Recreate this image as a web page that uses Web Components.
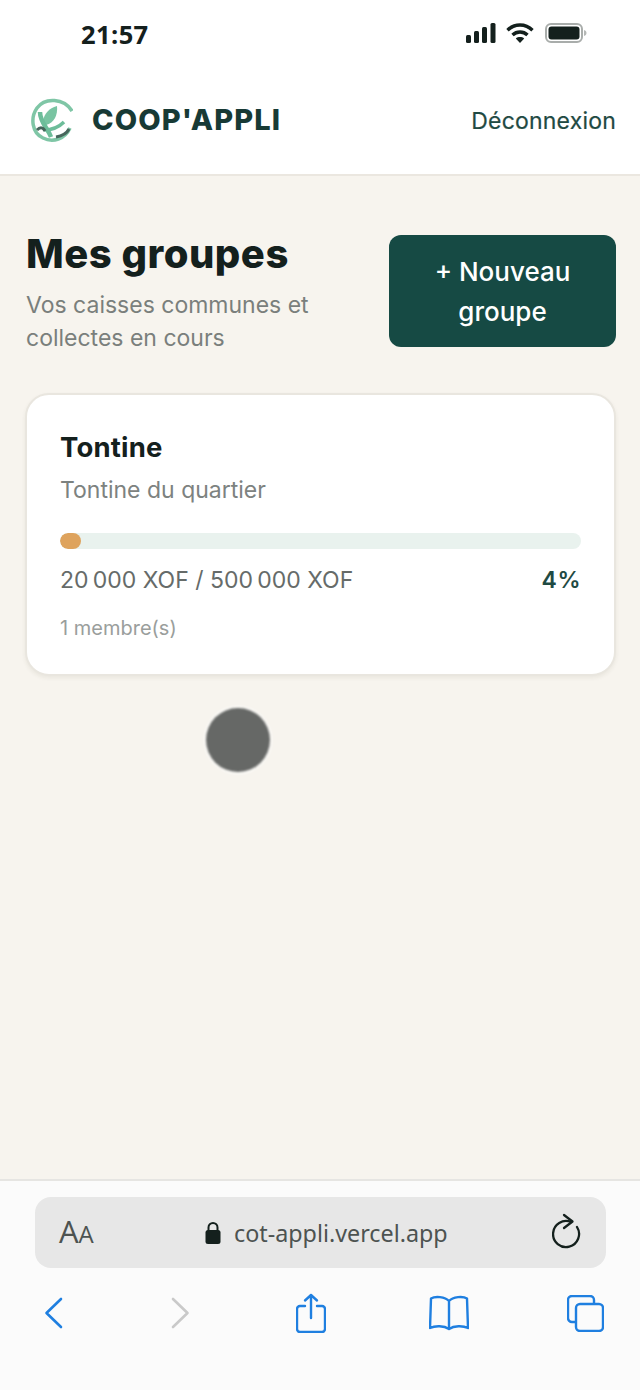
<!DOCTYPE html>
<html lang="fr">
<head>
<meta charset="utf-8">
<title>Coop'Appli</title>
<style>
  html, body { margin: 0; height: 100%; }
  body { width: 640px; height: 1390px; overflow: hidden; font-family: Inter, "Liberation Sans", sans-serif; background: #f7f4ee; position: relative; }
  #app { display: flex; flex-direction: column; height: 1390px; }
</style>
</head>
<body>
<div id="app">
  <status-bar time="21:57"></status-bar>
  <app-header></app-header>
  <main-area>
    <page-head title="Mes groupes" action="+ Nouveau groupe">Vos caisses communes et collectes en cours</page-head>
    <group-card name="Tontine" desc="Tontine du quartier" amount="20&#8201;000 XOF / 500&#8201;000 XOF" percent="4" members="1 membre(s)"></group-card>
  </main-area>
  <safari-bar url="cot-appli.vercel.app"></safari-bar>
</div>
<touch-dot></touch-dot>

<script>
class StatusBar extends HTMLElement {
  constructor() {
    super();
    this.attachShadow({ mode: 'open' }).innerHTML = `
<style>
  :host { display: flex; height: 68px; background: #fff; justify-content: space-between; box-sizing: border-box; padding: 20px 53px 0 81px; color: #14201d; }
  .time { font: 700 25.5px/28px "Open Sans", sans-serif; letter-spacing: .4px; }
  .icons { display: flex; gap: 9px; height: 24px; align-items: flex-start; margin-top: 2px; }
</style>
<span class="time">${this.getAttribute('time')}</span>
<div class="icons">
  <svg width="32" height="22" viewBox="0 0 32 22"><g fill="#14201d"><rect x="1" y="13" width="5" height="8" rx="1.5"/><rect x="9" y="9" width="5" height="12" rx="1.5"/><rect x="17" y="5" width="5" height="16" rx="1.5"/><rect x="25.500" y="1" width="5" height="20" rx="1.5"/></g></svg>
  <svg width="28" height="22" viewBox="0 0 28 22" fill="none" stroke="#14201d" stroke-width="3.400"><path d="M1.500 8.200C8.500 1.300 19.500 1.300 26.500 8.200"/><path d="M6.500 13C10.800 9 17.200 9 21.500 13"/><path d="M14 21 9.800 16.400C12 14.500 16 14.500 18.200 16.400Z" fill="#14201d" stroke="none"/></svg>
  <svg width="42" height="22" viewBox="0 0 42 22" style="margin-left:2px"><rect x="1" y="2" width="36" height="18" rx="5" fill="none" stroke="#a9adab" stroke-width="2"/><rect x="3.500" y="4.500" width="31" height="13" rx="3" fill="#14201d"/><path d="M39 8c1.500.4 2.500 1.500 2.500 3s-1 2.600-2.500 3z" fill="#b5b8b6"/></svg>
</div>`;
  }
}
customElements.define('status-bar', StatusBar);

class AppHeader extends HTMLElement {
  constructor() {
    super();
    this.attachShadow({ mode: 'open' }).innerHTML = `
<style>
  :host { display: flex; align-items: center; justify-content: space-between; height: 108px; box-sizing: border-box; background: #fff; border-bottom: 2px solid #ebe7e0; padding: 0 24px 0 31px; }
  .brand { display: flex; align-items: center; gap: 19px; margin-top: -2px; }
  svg { filter: blur(.5px); }
  .name { font: 800 29px/32px Inter, sans-serif; color: #173a35; letter-spacing: 1.1px; }
  .logout { font: 400 23px/28px Inter, sans-serif; color: #1f4a43; -webkit-text-stroke: .2px #1f4a43; letter-spacing: .2px; }
</style>
<div class="brand">
  <svg width="42" height="46" viewBox="0 0 42 46" fill="none">
    <path d="M41 14C33 1 14 0 6 11-1 21 1 36 12 41c10 5 22 1 27-10" stroke="#7fc6a6" stroke-width="3.500"/>
    <path d="M26 9C18 11 13 17 12 24l3 4c8-2 12-10 11-19z" fill="#79c4a2"/>
    <path d="M9 15c0 10 7 15 11 25" stroke="#6dbd9a" stroke-width="4.500"/>
    <path d="M13 33c7 0 15-3 20-8" stroke="#6dbd9a" stroke-width="3.500"/>
    <path d="M6 33c3-3 6-3 8 1" stroke="#47665c" stroke-width="3"/>
    <path d="M25 40c6-1 11-4 13-8" stroke="#47665c" stroke-width="3"/>
  </svg>
  <span class="name">COOP'APPLI</span>
</div>
<span class="logout">Déconnexion</span>`;
  }
}
customElements.define('app-header', AppHeader);

class MainArea extends HTMLElement {
  constructor() {
    super();
    this.attachShadow({ mode: 'open' }).innerHTML = `
<style>
  :host { display: flex; flex-direction: column; flex: 1; min-height: 0; background: #f7f4ee; padding: 58px 24px 0 26px; gap: 38px; }
</style>
<slot></slot>`;
  }
}
customElements.define('main-area', MainArea);

class PageHead extends HTMLElement {
  constructor() {
    super();
    this.attachShadow({ mode: 'open' }).innerHTML = `
<style>
  :host { display: flex; justify-content: space-between; align-items: flex-start; }
  h1 { margin: -1px 0 14px; font: 800 40px/42px Inter, sans-serif; color: #14201d; letter-spacing: .5px; }
  p { margin: 0; width: 330px; font: 400 23px/33px Inter, sans-serif; color: #7a7f7c; }
  button { all: unset; box-sizing: border-box; width: 227px; height: 112px; background: #164a44; border-radius: 12px; color: #fff; font: 500 26px/40px Inter, sans-serif; text-align: center; padding: 2px 30px 0; margin-top: 1px; }
</style>
<div>
  <h1>${this.getAttribute('title')}</h1>
  <p><slot></slot></p>
</div>
<button>${this.getAttribute('action')}</button>`;
  }
}
customElements.define('page-head', PageHead);

class ProgressBar extends HTMLElement {
  constructor() {
    super();
    this.attachShadow({ mode: 'open' }).innerHTML = `
<style>
  :host { display: block; height: 16px; border-radius: 8px; background: #e9f2ee; overflow: hidden; }
  div { height: 100%; width: ${this.getAttribute('value')}%; border-radius: 8px; background: #dea35d; }
</style>
<div></div>`;
  }
}
customElements.define('progress-bar', ProgressBar);

class GroupCard extends HTMLElement {
  constructor() {
    super();
    const a = n => this.getAttribute(n);
    this.attachShadow({ mode: 'open' }).innerHTML = `
<style>
  :host { display: block; box-sizing: border-box; height: 283px; margin-left: -1px; background: #fff; border: 2px solid #e9e6df; border-radius: 24px; box-shadow: 0 2px 4px rgba(60,50,30,.07); padding: 34px 33px 0 33px; }
  h2 { margin: 0; font: 700 27.5px/36px Inter, sans-serif; color: #14201d; letter-spacing: .2px; }
  .desc { margin: 9px 0 27px; font: 400 23px/32px Inter, sans-serif; color: #7d8280; }
  .row { display: flex; justify-content: space-between; margin-top: 15px; font: 400 23px/32px Inter, sans-serif; color: #666b69; }
  .pct { font-weight: 600; color: #1f4a43; letter-spacing: .5px; }
  .members { margin-top: 18px; font: 400 20px/28px Inter, sans-serif; color: #9a9e9c; }
</style>
<h2>${a('name')}</h2>
<div class="desc">${a('desc')}</div>
<progress-bar value="${a('percent')}"></progress-bar>
<div class="row"><span>${a('amount')}</span><span class="pct">${a('percent')}%</span></div>
<div class="members">${a('members')}</div>`;
  }
}
customElements.define('group-card', GroupCard);

class SafariBar extends HTMLElement {
  constructor() {
    super();
    this.attachShadow({ mode: 'open' }).innerHTML = `
<style>
  :host { display: block; height: 211px; box-sizing: border-box; background: #fbfbfb; border-top: 2px solid #e6e5e2; padding: 16px 34px 0 35px; }
  .url { display: flex; align-items: center; height: 71px; background: #e7e7e7; border-radius: 16px; padding: 0 24px; color: #4d5351; }
  .aa { width: 146px; font: 400 31px/36px "Open Sans", sans-serif; flex: none; white-space: nowrap; }
  .aa small { font-size: 24px; }
  .addr { display: flex; align-items: center; gap: 13px; font: 400 23.3px/32px "Noto Sans", sans-serif; flex: 1; }
  .tools { display: flex; align-items: center; margin: 18px 0 0; height: 54px; padding-left: 9px; }
  .tools svg + svg { flex: none; }
  .fwd { margin-left: 106px; }
  .share { margin-left: 106px; }
  .book { margin-left: 103px; }
  .tabs { margin-left: 98px; }
</style>
<div class="url">
  <span class="aa">A<small>A</small></span>
  <span class="addr">
    <svg width="16" height="23" viewBox="0 0 16 23"><path d="M3.500 10V6.500a4.500 4.500 0 0 1 9 0V10" fill="none" stroke="#14201d" stroke-width="2"/><rect x="0.500" y="9" width="15" height="14" rx="2.500" fill="#14201d"/></svg>
    ${this.getAttribute('url')}
  </span>
  <svg width="30" height="36" viewBox="0 0 30 36" fill="none" stroke="#14201d" stroke-width="2.300" stroke-linecap="round" stroke-linejoin="round" style="margin-top:-3px"><path d="M19 9A13 13 0 1 0 25 14"/><path d="M12 2l8.500 6.500L12 15"/></svg>
</div>
<div class="tools">
  <svg width="20" height="32" viewBox="0 0 20 32" fill="none" stroke="#1f7fe0" stroke-width="2.600" stroke-linecap="round" stroke-linejoin="round"><path d="M17 2 2.500 16 17 30"/></svg>
  <svg class="fwd" width="20" height="32" viewBox="0 0 20 32" fill="none" stroke="#c9c9c9" stroke-width="2.600" stroke-linecap="round" stroke-linejoin="round"><path d="M3 2l14.500 14L3 30"/></svg>
  <svg class="share" width="30" height="40" viewBox="0 0 30 40" fill="none" stroke="#1f7fe0" stroke-width="2.400" stroke-linecap="round" stroke-linejoin="round"><path d="M9 13H4a3 3 0 0 0-3 3v20a3 3 0 0 0 3 3h22a3 3 0 0 0 3-3V16a3 3 0 0 0-3-3h-5"/><path d="M15 25V2M9 7.500 15 2l6 5.500"/></svg>
  <svg class="book" width="40" height="36" viewBox="0 0 40 36" fill="none" stroke="#1f7fe0" stroke-width="2.400" stroke-linejoin="round"><path d="M20 6C16 1.500 6 1 2 3.500L1 33c5-2.500 14-2.500 19 1 5-3.500 14-3.500 19-1l-1-29.500C34 1 24 1.500 20 6Zm0 0v27"/></svg>
  <svg class="tabs" width="37" height="37" viewBox="0 0 37 37" fill="none" stroke="#1f7fe0" stroke-width="2.400"><path d="M8 27H5a4 4 0 0 1-4-4V5a4 4 0 0 1 4-4h18a4 4 0 0 1 4 4v3"/><rect x="9" y="9" width="27" height="27" rx="4"/></svg>
</div>`;
  }
}
customElements.define('safari-bar', SafariBar);

class TouchDot extends HTMLElement {
  constructor() {
    super();
    this.attachShadow({ mode: 'open' }).innerHTML = `
<style>
  :host { position: absolute; left: 206px; top: 708px; width: 64px; height: 64px; border-radius: 50%; background: #666866; box-shadow: 0 0 2px 2px rgba(255,255,255,.6); filter: blur(1px); }
</style>`;
  }
}
customElements.define('touch-dot', TouchDot);
</script>
</body>
</html>
